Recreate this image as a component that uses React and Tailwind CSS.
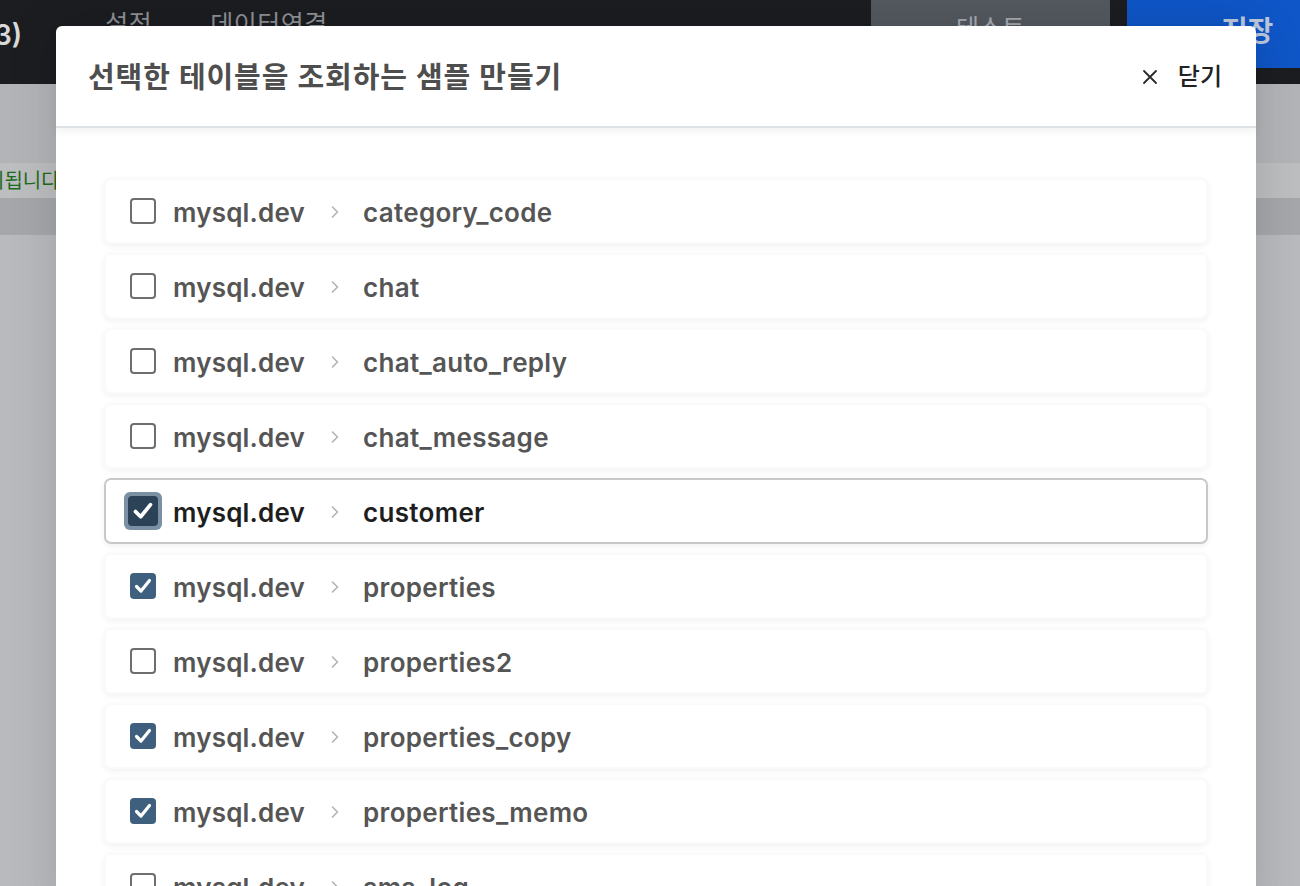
import React from "react";

const rows = [
  { name: "category_code" },
  { name: "chat" },
  { name: "chat_auto_reply" },
  { name: "chat_message" },
  { name: "customer", checked: true, focused: true },
  { name: "properties", checked: true },
  { name: "properties2" },
  { name: "properties_copy", checked: true },
  { name: "properties_memo", checked: true },
  { name: "sms_log" },
];

function Check() {
  return (
    <svg viewBox="0 0 26 26" className="w-full h-full">
      <path d="M6.5 13.5 L11 18 L19.5 7.5" fill="none" stroke="white" strokeWidth="3.2" strokeLinecap="round" strokeLinejoin="round" />
    </svg>
  );
}

function Checkbox({ checked, focused }) {
  if (focused) {
    return (
      <div className="relative w-[26px] h-[26px] shrink-0">
        <div className="absolute -inset-[6px] rounded-[6px] bg-[#7b90a3]" />
        <div className="absolute -inset-[2px] rounded-[4px] bg-[#2c4257]">
          <Check />
        </div>
      </div>
    );
  }
  if (checked) {
    return (
      <div className="w-[26px] h-[26px] shrink-0 rounded-[4px] bg-[#3e607e]">
        <Check />
      </div>
    );
  }
  return <div className="w-[26px] h-[26px] shrink-0 rounded-[4px] border-2 border-[#6e6e6e] bg-white" />;
}

function Row({ name, checked, focused }) {
  const tc = focused ? "text-[#1e1e1e]" : "text-[#555555]";
  return (
    <div
      className={
        "h-[66px] shrink-0 rounded-[7px] bg-white flex items-center pl-[24px] border-2 shadow-[0_2px_6px_rgba(0,0,0,0.06)] " +
        (focused ? "border-[#c8c8c8]" : "border-[#fafafa]")
      }
    >
      <Checkbox checked={checked} focused={focused} />
      <span className={"ml-[17px] pt-[3px] text-[26px] font-semibold tracking-[0.2px] " + tc}>mysql.dev</span>
      <svg viewBox="0 0 10 14" className="w-[10px] h-[14px] ml-[25px] mr-[23px] mt-[2px]">
        <path d="M2.5 2 L7.5 7 L2.5 12" fill="none" stroke="#b3b3b3" strokeWidth="1.6" strokeLinecap="round" strokeLinejoin="round" />
      </svg>
      <span className={"pt-[3px] text-[26px] font-semibold tracking-[0.3px] " + tc}>{name}</span>
    </div>
  );
}

export default function App() {
  return (
    <div
      className="relative w-[1300px] h-[886px] overflow-hidden bg-[#b9babd]"
      style={{ fontFamily: "Inter, 'Noto Sans CJK KR', sans-serif" }}
    >
      {/* top bar */}
      <div className="h-[84px] bg-[#1b1d21] flex items-start relative">
        <span className="mt-[14px] -ml-[6px] text-[28px] font-semibold text-[#d9d9d9]">3)</span>
        <span className="ml-[83px] mt-[6px] text-[25px] tracking-[0.5px] text-[#8d9096]">설정</span>
        <span className="ml-[58px] mt-[6px] text-[25px] tracking-[0.5px] text-[#8d9096]">데이터연결</span>
        <div className="ml-auto w-[239px] h-[68px] bg-[#545960] flex justify-center pt-[10px] text-[25px] text-[#a7abb1]">테스트</div>
        <div className="ml-[17px] w-[173px] h-[68px] bg-[#0f56c8] flex justify-center pl-[68px] pt-[10px] text-[28px] font-semibold text-[#bcc8dc]">
          저장
        </div>
      </div>
      <div className="h-[79px] bg-[#b3b4b7]" />
      <div className="h-[35px] bg-[#bdbec0] flex items-center overflow-hidden">
        <span className="-ml-[14px] text-[20px] text-[#1d6b1d] whitespace-nowrap">리됩니다.</span>
      </div>
      <div className="h-[37px] bg-[#a6a7aa]" />

      {/* modal */}
      <div className="absolute left-[56px] top-[26px] w-[1200px] h-[900px] bg-white rounded-t-[6px] shadow-[0_0_50px_rgba(0,0,0,0.14)] flex flex-col">
        <div className="h-[102px] shrink-0 flex items-center justify-between pl-[32px] pr-[34px] border-b-2 border-[#dde2e6] shadow-[0_4px_8px_rgba(0,0,0,0.05)] relative z-10">
          <span className="pt-[3px] text-[29px] font-semibold text-[#4e4e4e] tracking-[0.9px]">선택한 테이블을 조회하는 샘플 만들기</span>
          <div className="flex items-center text-[#222] pt-[2px]">
            <svg viewBox="0 0 16 16" className="w-[16px] h-[16px]">
              <path d="M2 2 L14 14 M14 2 L2 14" stroke="#2a2a2a" strokeWidth="1.8" strokeLinecap="round" />
            </svg>
            <span className="ml-[20px] text-[24px] font-medium">닫기</span>
          </div>
        </div>
        <div className="pt-[50px] px-[48px] flex flex-col gap-[9px]">
          {rows.map((r) => (
            <Row key={r.name} {...r} />
          ))}
        </div>
      </div>
    </div>
  );
}
